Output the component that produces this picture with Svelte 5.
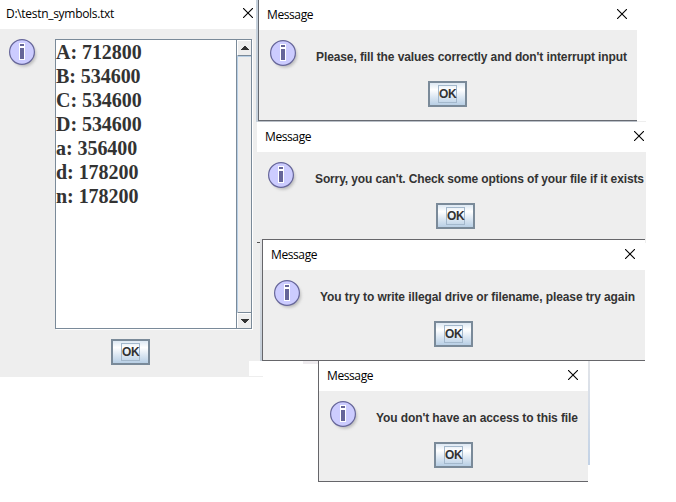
<script>
  const lines = ['A: 712800', 'B: 534600', 'C: 534600', 'D: 534600', 'a: 356400', 'd: 178200', 'n: 178200'];
  const dialogs = [
    { name: 'values', icon: 11, gap: 16, ok: 169, close: 10, width: 311, text: "Please, fill the values correctly and don't interrupt input" },
    { name: 'options', icon: 11, gap: 17, ok: 179, close: 2, width: 329, text: "Sorry, you can't. Check some options of your file if it exists" },
    { name: 'illegal', icon: 11, gap: 16, ok: 171, close: 10, width: 315, text: 'You try to write illegal drive or filename, please try again' },
    { name: 'access', icon: 11, gap: 16, ok: 115, close: 10, width: 202, text: "You don't have an access to this file" }
  ];
</script>

{#snippet cross()}
  <svg class="cross" width="10" height="10" viewBox="0 0 10 10"><path d="M0 0l10 10M10 0l-10 10" /></svg>
{/snippet}

{#snippet info()}
  <svg class="info" width="30" height="30" viewBox="0 0 30 30">
    <circle class="shade" cx="15" cy="15.500" r="12" />
    <circle cx="13" cy="13" r="12.400" fill="#ccccff" stroke="#666699" stroke-width="1.200" />
    <path d="M10 4h6v17h-6z" fill="#fff" />
    <path d="M11 5h4v2h-4zM11 9h4v11h-4z" fill="#666699" />
  </svg>
{/snippet}

{#snippet ok()}
  <button><span>OK</span></button>
{/snippet}

<main>
  <section class="window file">
    <header><span class="path">D:\testn_symbols.txt</span>{@render cross()}</header>
    <div class="content">
      {@render info()}
      <div class="scroll">
        <div class="list">
          {#each lines as line}<div>{line}</div>{/each}
        </div>
        <div class="bar">
          <div class="arrow up"><svg width="8" height="4" viewBox="0 0 8 4"><path d="M3 0h2v1h1v1h1v1h1v1H0V3h1V2h1V1h1z" /></svg></div>
          <div class="track"></div>
          <div class="arrow down"><svg width="8" height="4" viewBox="0 0 8 4"><path d="M0 0h8v1H7v1H6v1H5v1H3V3H2V2H1V1H0z" /></svg></div>
        </div>
      </div>
    </div>
    <div class="actions">{@render ok()}</div>
  </section>
  <i class="patch"></i>
  <i class="scrap"></i>
  <i class="edge left"></i>
  <i class="edge line"></i>
  {#each dialogs as d}
    <section class="window {d.name}">
      <header style="padding-right:{d.close}px"><span class="title">Message</span>{@render cross()}</header>
      <div class="content" style="padding-left:{d.icon}px">
        {@render info()}
        <svg class="msg" style="margin-left:{d.gap}px" width={d.width + 2} height="20"><text x="0" y="14" textLength={d.width}>{d.text}</text></svg>
      </div>
      <div class="actions" style="padding-left:{d.ok}px">{@render ok()}</div>
    </section>
  {/each}
  <i class="edge dash"></i>
  <i class="edge middle"></i>
  <i class="edge right"></i>
</main>

<style>
  :global(body) { background: #fff; overflow: hidden; }
  main { position: relative; width: 676px; height: 502px; background: #fff; overflow: hidden; }
  .window { position: absolute; box-sizing: border-box; background: #eee; }
  header { display: flex; justify-content: space-between; align-items: flex-start; box-sizing: border-box; height: 30px; background: #fff; padding: 6px 9px 0 8px; font: 12px/17px 'Open Sans', 'Noto Sans', sans-serif; color: #000; white-space: nowrap; }
  .title { letter-spacing: -.4px; }
  .path { letter-spacing: -.3px; }
  .cross { display: block; margin-top: 3px; }
  .cross path { stroke: #000; stroke-width: 1.100; fill: none; }
  .content { display: flex; align-items: flex-start; padding-top: 10px; height: 41px; }
  .info { display: block; flex: none; }
  .shade { fill: #999; opacity: .6; filter: blur(1.500px); }
  .msg { display: block; flex: none; margin-top: 7px; overflow: visible; font: bold 12px 'Liberation Sans', Arial, sans-serif; fill: #333; }
  .actions { display: flex; }
  button { display: flex; box-sizing: border-box; width: 39px; height: 26px; padding: 2px 0 0 8px; border: 2px solid #7a8a99; border-radius: 0; background: linear-gradient(#dde8f3, #fff 30%, #dde8f3 62%, #b8cfe5); }
  button span { box-sizing: border-box; width: 19px; height: 18px; border: 1px solid #a3b8cc; font: bold 12px/17px 'Liberation Sans', Arial, sans-serif; letter-spacing: -.4px; color: #333; }

  .file { left: 0; top: 0; width: 263px; height: 377px; }
  .file header { height: 29px; padding: 5px 10px 0 6px; }
  .file .content { padding-left: 9px; height: 300px; box-sizing: border-box; }
  .file .actions { padding: 10px 0 0 111px; }
  .scroll { display: flex; box-sizing: border-box; margin-left: 16px; width: 197px; height: 290px; border: 1px solid #7a8a99; box-shadow: 1px 1px #fff; background: #fff; }
  .list { flex: 1; font: bold 20px/24px 'Liberation Serif', 'Times New Roman', serif; letter-spacing: -.05px; color: #333; }
  .bar { display: flex; flex-direction: column; width: 14px; border-left: 1px solid #7a8a99; background: #eee; }
  .arrow { display: flex; justify-content: center; align-items: center; box-sizing: border-box; height: 16px; border-top: 1px solid #fff; border-left: 1px solid #fff; }
  .arrow path { fill: #333; }
  .up { border-bottom: 1px solid #7a8a99; }
  .down { border-top: 1px solid #7a8a99; box-shadow: inset 0 1px #fff; }
  .track { flex: 1; border-top: 1px solid #b8cfe5; border-left: 1px solid #b8cfe5; }

  .values { left: 258px; top: 0; width: 379px; height: 121px; border-left: 1px solid #666a72; border-bottom: 1px solid #666a72; }
  .options { left: 257px; top: 122px; width: 389px; height: 121px; }
  .illegal { left: 262px; top: 239px; width: 383px; height: 122px; border: 1px solid #66666a; border-right: 0; }
  .access { left: 318px; top: 361px; width: 270px; height: 121px; border-left: 1px solid #66666a; border-bottom: 1px solid #66666a; }

  i { position: absolute; display: block; }
  .patch { left: 249px; top: 361px; width: 14px; height: 15px; background: #fff; }
  .scrap { left: 303px; top: 361px; width: 15px; height: 3px; background: #eeebee; }
  .edge { background: #c5d0db; }
  .left { left: 256px; top: 0; width: 2px; height: 122px; }
  .line { left: 258px; top: 121px; width: 388px; height: 1px; background: linear-gradient(90deg, #b9bfc7 379px, #eee 379px); }
  .dash { left: 257px; top: 242px; width: 3px; height: 1px; background: #555; }
  .middle { left: 260px; top: 239px; width: 2px; height: 122px; background: linear-gradient(#e2e3e5, #c2ccd7); }
  .right { left: 588px; top: 361px; width: 2px; height: 104px; background: linear-gradient(#e3e5e9, #c2d2e6); }
</style>
